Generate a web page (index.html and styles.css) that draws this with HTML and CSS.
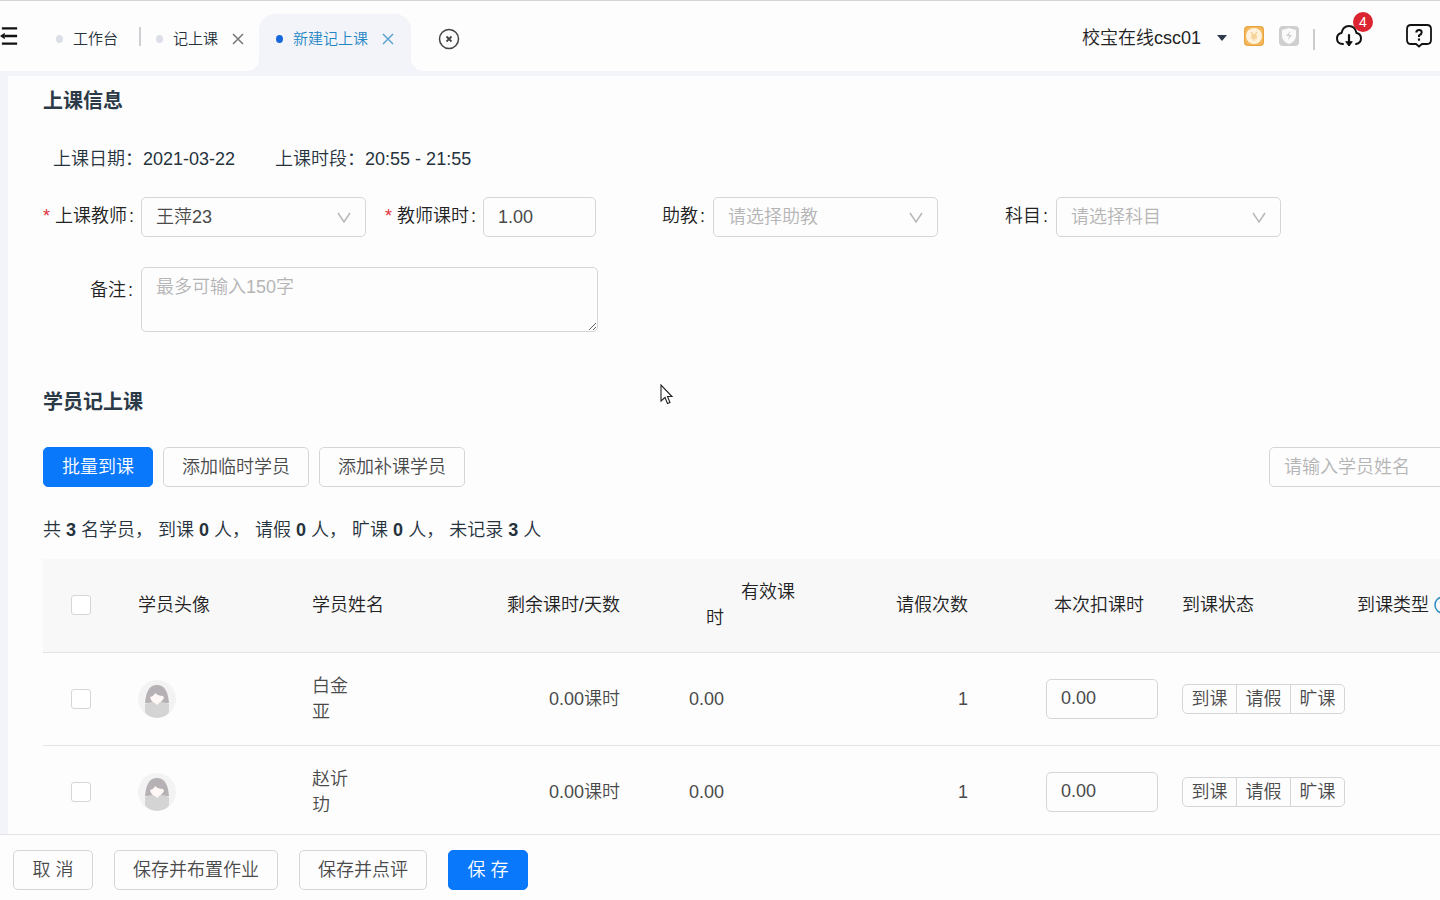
FILE: index.html
```html
<!DOCTYPE html>
<html lang="zh-CN">
<head>
<meta charset="utf-8">
<title>新建记上课</title>
<link rel="stylesheet" href="styles.css">
</head>
<body>
<svg class="sprite" aria-hidden="true">
  <symbol id="cross" viewBox="0 0 12 12"><path d="M1 1l10 10M11 1L1 11" fill="none" stroke="currentColor" stroke-width="1.5"/></symbol>
  <symbol id="chevron" viewBox="0 0 14 12"><path d="M1 1l6 9 6-9" fill="none" stroke="currentColor" stroke-width="1.4"/></symbol>
  <symbol id="avatar" viewBox="0 0 38 38">
    <circle cx="19" cy="19" r="19" fill="#f4f3f4"/>
    <path d="M7 23C8 12 11 5 19 5s11 7 12 18z" fill="#b5b1b4"/>
    <path d="M7 24q3-2 8-2h8q5 0 8 2v8q-2 5-12 6Q9 37 7 32z" fill="#d4d4d5"/>
    <path d="M12 17q4-1 5-4 3 3 8 3l1 2q-2 4-5 5l-2 2-2-2q-4-1-5-6z" fill="#fff8f6"/>
  </symbol>
</svg>

<header class="topbar">
  <button class="icon-btn menu" aria-label="收起菜单">
    <svg width="20" height="20" viewBox="0 0 20 20"><path d="M2 2h16M5 10h13M2 18h16" stroke="#111" stroke-width="2.4" fill="none"/><path d="M0 10l5-3.500v7z" fill="#111"/></svg>
  </button>
  <nav class="tabs">
    <a class="tab" href="#home"><i class="dot"></i>工作台</a>
    <i class="tab-split"></i>
    <div class="tab"><i class="dot"></i><a href="#record">记上课</a><button class="icon-btn" aria-label="关闭记上课"><svg width="12" height="12"><use href="#cross"/></svg></button></div>
    <div class="tab active"><i class="dot"></i><a href="#new">新建记上课</a><button class="icon-btn" aria-label="关闭新建记上课"><svg width="12" height="12"><use href="#cross"/></svg></button></div>
    <button class="icon-btn close-all" aria-label="关闭全部">
      <svg width="22" height="22" viewBox="0 0 22 22" fill="none" stroke="#444"><circle cx="11" cy="11" r="9.500" stroke-width="1.500"/><path d="M8.500 8.500l5 5M13.500 8.500l-5 5" stroke-width="1.800"/></svg>
    </button>
  </nav>
  <div class="tools">
    <button class="icon-btn account">校宝在线csc01<svg width="10" height="6" viewBox="0 0 10 6"><path d="M0 0h10L5 6z" fill="#2f3b4a"/></svg></button>
    <button class="icon-btn coin" aria-label="金币"><svg width="22" height="22" viewBox="0 0 22 22"><rect x="1" y="1" width="20" height="20" rx="4" fill="#e9a33c"/><rect x="2" y="2" width="18" height="18" rx="4" fill="#f5b95c"/><circle cx="11" cy="11" r="8" fill="#fff1dc"/><path d="M8 7l3 4 3-4M11 11v5M8 11h6M8 13h6" fill="none" stroke="#f6cf92" stroke-width="1.300"/></svg></button>
    <button class="icon-btn shield" aria-label="安全"><svg width="22" height="22" viewBox="0 0 22 22"><rect x="1" y="1" width="20" height="20" rx="4" fill="#cfcfcf"/><path d="M11 3l7 2v6q0 5-7 8-7-3-7-8V5z" fill="#fafafa"/><path d="M12 6l-4 5h3l-1 4 4-5h-3z" fill="#cfcfcf"/></svg></button>
    <i class="tool-split"></i>
    <button class="icon-btn cloud" aria-label="下载">
      <svg width="28" height="24" viewBox="0 0 28 24" fill="none" stroke="#111" stroke-width="2" stroke-linecap="round"><path d="M8 20Q2 20 2 14.500 2 10 6.500 9 8 2 14 2t7.500 7Q26 10 26 14.500 26 19 21 20"/><path d="M14 11v10" stroke-width="2.200"/><path d="M11 18l3 4 3-4z" fill="#111" stroke-width="1"/></svg>
      <span class="badge">4</span>
    </button>
    <button class="icon-btn help" aria-label="帮助">
      <svg width="26" height="24" viewBox="0 0 26 24" fill="none" stroke="#111" stroke-width="1.800"><path d="M5 1h16q4 0 4 4v11q0 4-4 4h-5l-3 2.500L10 20H5q-4 0-4-4V5q0-4 4-4z"/><path d="M10.300 8.500Q10.300 6 13 6t2.700 2.400Q15.700 10 13 11.500V13" stroke-width="2"/><path d="M13 14.500v2.200" stroke-width="2.200"/></svg>
    </button>
  </div>
</header>

<main class="panel">
  <section class="info">
    <h2>上课信息</h2>
    <div class="facts"><span>上课日期：<b>2021-03-22</b></span><span>上课时段：<b>20:55 - 21:55</b></span></div>
    <form class="form">
      <label for="teacher" class="required">上课教师</label>
      <div class="select"><select id="teacher" class="control"><option>王萍23</option></select><svg width="14" height="12"><use href="#chevron"/></svg></div>
      <label for="hours" class="required">教师课时</label>
      <input id="hours" class="control" value="1.00">
      <label for="assistant">助教</label>
      <div class="select empty"><select id="assistant" class="control"><option>请选择助教</option></select><svg width="14" height="12"><use href="#chevron"/></svg></div>
      <label for="subject">科目</label>
      <div class="select empty"><select id="subject" class="control"><option>请选择科目</option></select><svg width="14" height="12"><use href="#chevron"/></svg></div>
      <label for="remark" class="remark-label">备注</label>
      <textarea id="remark" class="control" placeholder="最多可输入150字"></textarea>
    </form>
  </section>

  <section class="students">
    <h2>学员记上课</h2>
    <div class="actions">
      <button class="btn primary">批量到课</button>
      <button class="btn">添加临时学员</button>
      <button class="btn">添加补课学员</button>
      <input class="control search" aria-label="学员姓名" placeholder="请输入学员姓名">
    </div>
    <p class="summary">共 <b>3</b> 名学员， 到课 <b>0</b> 人， 请假 <b>0</b> 人， 旷课 <b>0</b> 人， 未记录 <b>3</b> 人</p>
    <table class="table">
      <colgroup><col class="c-check"><col class="c-avatar"><col class="c-name"><col class="c-left"><col class="c-valid"><col class="c-leave"><col class="c-deduct"><col class="c-state"><col class="c-type"></colgroup>
      <thead>
        <tr>
          <th class="check"><input type="checkbox" aria-label="全选"></th>
          <th>学员头像</th>
          <th class="nowrap">学员姓名</th>
          <th class="num">剩余课时/天数</th>
          <th class="num">有效课<span class="wrapped">时</span></th>
          <th class="num">请假次数</th>
          <th class="num deduct-head">本次扣课时</th>
          <th>到课状态</th>
          <th class="type nowrap">到课类型 <svg width="18" height="18" viewBox="0 0 18 18" fill="none" stroke="#2b8cc4" stroke-width="1.500"><circle cx="9" cy="9" r="8"/><path d="M6.500 7q0-2.500 2.500-2.500T11.500 7Q11.500 8.500 9 10v1M9 12.500V14"/></svg></th>
        </tr>
      </thead>
      <tbody>
        <tr>
          <td class="check"><input type="checkbox" aria-label="选择白金亚"></td>
          <td><svg class="avatar" width="38" height="38"><use href="#avatar"/></svg></td>
          <td>白金亚</td>
          <td class="num">0.00课时</td>
          <td class="num valid">0.00</td>
          <td class="num">1</td>
          <td class="deduct"><input class="control" aria-label="本次扣课时" value="0.00"></td>
          <td class="state"><div class="group"><button>到课</button><button>请假</button><button>旷课</button></div></td>
          <td></td>
        </tr>
        <tr>
          <td class="check"><input type="checkbox" aria-label="选择赵䜣玏"></td>
          <td><svg class="avatar" width="38" height="38"><use href="#avatar"/></svg></td>
          <td>赵䜣玏</td>
          <td class="num">0.00课时</td>
          <td class="num valid">0.00</td>
          <td class="num">1</td>
          <td class="deduct"><input class="control" aria-label="本次扣课时" value="0.00"></td>
          <td class="state"><div class="group"><button>到课</button><button>请假</button><button>旷课</button></div></td>
          <td></td>
        </tr>
      </tbody>
    </table>
  </section>
</main>

<footer class="footer">
  <button class="btn">取 消</button>
  <button class="btn">保存并布置作业</button>
  <button class="btn">保存并点评</button>
  <button class="btn primary">保 存</button>
</footer>

<svg class="pointer" width="14" height="21" viewBox="0 0 14 21" aria-hidden="true"><path d="M1 1v16l4-3.500 2.500 6 2.500-1-2.500-6H12z" fill="#fff" stroke="#222" stroke-width="1.100"/></svg>
</body>
</html>
```

FILE: styles.css
```css
* { box-sizing: border-box; }

body {
  margin: 0;
  height: 100vh;
  display: flex;
  flex-direction: column;
  overflow: hidden;
  background: #f3f4f9;
  color: #26323c;
  font: 350 18px/26px "Liberation Sans", "Noto Sans CJK SC", sans-serif;
}

button, input, select, textarea { font: inherit; color: inherit; }
a { color: inherit; text-decoration: none; }
h2 { margin: 0; font-size: 20px; line-height: 30px; font-weight: 700; color: #2c3a47; }
.sprite { display: none; }

.icon-btn {
  display: flex;
  align-items: center;
  padding: 0;
  border: 0;
  background: none;
}

/* top bar */
.topbar {
  flex: none;
  display: flex;
  justify-content: space-between;
  height: 71px;
  border-top: 1px solid #d6d6da;
  background: #fdfdfe;
}
.menu { width: 48px; padding-right: 29px; }
.tabs { flex: 1; display: flex; font-size: 15px; }
.tab {
  display: flex;
  align-items: center;
  padding: 5px 15px 0 8px;
}
.tab:first-child { padding-right: 21px; }
.tab .dot { width: 7px; height: 8px; margin-right: 10px; border-radius: 50%; background: #dcdfe8; }
.tab .icon-btn { margin-left: 14px; color: #777; }
.tab-split { width: 9px; padding-top: 26px; }
.tab-split::before { content: ""; display: block; width: 2px; height: 19px; background: #d0d0d4; }
.tab.active {
  position: relative;
  margin-top: 13px;
  padding: 0 17px 8px;
  color: #1f86c4;
  background: #f3f4f9;
  border-radius: 16px 16px 0 0;
}
.tab.active::before, .tab.active::after {
  content: "";
  position: absolute;
  bottom: 0;
  width: 12px;
  height: 12px;
}
.tab.active::before { right: 100%; background: radial-gradient(circle at 0 0, transparent 12px, #f3f4f9 12px); }
.tab.active::after { left: 100%; background: radial-gradient(circle at 100% 0, transparent 12px, #f3f4f9 12px); }
.tab.active .dot { background: #1668dc; }
.tab.active .icon-btn { color: #5ba3cf; }
.close-all { padding: 5px 0 0 27px; }
.tools { display: flex; align-items: center; padding-right: 8px; }
.account { gap: 16px; padding-top: 4px; color: #222; }
.coin { margin-left: 16px; }
.shield { margin-left: 13px; }
.tool-split { width: 2px; height: 21px; margin: 6px 20px 0 13px; background: #ccc; }
.cloud { position: relative; margin-right: 43px; }
.badge {
  position: absolute;
  right: -10px;
  top: -12px;
  width: 20px;
  height: 20px;
  border-radius: 50%;
  background: #dc2430;
  color: #fff;
  font-size: 14px;
  line-height: 20px;
  text-align: center;
}

/* content */
.panel {
  flex: 1;
  min-height: 0;
  margin: 5px 0 0 8px;
  padding: 10px 0 0 35px;
  overflow: hidden;
  background: #fdfdfe;
}
.facts { display: flex; gap: 40px; padding: 30px 0 0 10px; }
.facts b { font-weight: 350; }
.form {
  display: grid;
  grid-template-columns: 98px 225px 117px 113px 117px 225px 118px 225px;
  row-gap: 30px;
  padding-top: 25px;
  color: #222;
}
.form label { display: flex; justify-content: flex-end; padding: 6px 8px 0 0; white-space: nowrap; }
.form label::after { content: ":"; margin-left: 2px; }
.form .required::before { content: "*"; margin-right: 5px; color: #e0303a; }
.form .required { padding-right: 7px; }
.form .remark-label { padding-top: 10px; }

.control {
  display: block;
  width: 100%;
  height: 40px;
  padding: 0 14px;
  border: 1px solid #d6d6d9;
  border-radius: 5px;
  background: #fdfdfe;
  color: #4a4a4a;
  outline: 0;
}
.control::placeholder { color: #b5b5b5; }
.select { position: relative; }
.select .control { appearance: none; }
.select svg { position: absolute; right: 15px; top: 15px; color: #b5b5b5; pointer-events: none; }
.select.empty .control { color: #b5b5b5; }
#remark { grid-column: 2 / 5; width: 457px; height: 65px; padding-top: 6px; }

.students { padding-top: 55px; }
.actions { display: flex; gap: 10px; padding-top: 30px; }
.btn {
  min-width: 80px;
  height: 40px;
  padding: 0 18px;
  border: 1px solid #d6d6d9;
  border-radius: 5px;
  background: #fdfdfe;
  color: #4a4a4a;
  white-space: nowrap;
}
.btn.primary { border-color: #0a78fa; background: #0a78fa; color: #fff; }
.search { flex: none; width: 220px; margin: 0 -49px 0 auto; }
.summary { margin: 0; padding: 30px 0 16px; white-space: nowrap; }
.summary b { font-weight: 700; }

.table { width: 1500px; table-layout: fixed; border-collapse: collapse; color: #4a4a4a; }
.c-check { width: 79px; }
.c-avatar { width: 174px; }
.c-name { width: 80px; }
.c-left { width: 260px; }
.c-valid { width: 175px; }
.c-leave { width: 173px; }
.c-deduct { width: 182px; }
.c-state { width: 179px; }
.table th, .table td {
  height: 93px;
  padding: 20px 16px;
  border-bottom: 1px solid #e3e3e6;
  font-weight: 350;
  text-align: left;
}
.table th { background: #f8f8f9; color: #222; }
.table .num { text-align: right; }
.table .nowrap { white-space: nowrap; }
.table .check { padding: 0 0 0 28px; }
.check input {
  display: block;
  appearance: none;
  width: 20px;
  height: 20px;
  margin: 0;
  border: 1px solid #d6d6d9;
  border-radius: 3px;
  background: #fff;
}
.wrapped { display: block; padding-right: 71px; }
.table .valid { padding-right: 87px; }
.table .deduct-head { padding-right: 22px; }
.table .deduct { padding: 0 8px 0 62px; }
.table .state { padding-right: 0; }
.table .type { padding-left: 12px; }
.type svg { vertical-align: -3px; }
.avatar { display: block; }
.group { display: flex; width: 163px; height: 30px; border: 1px solid #d6d6d9; border-radius: 5px; }
.group button { flex: 1; padding: 0; border: 0; background: none; line-height: 26px; }
.group button + button { border-left: 1px solid #d6d6d9; }

.footer {
  flex: none;
  display: flex;
  gap: 21px;
  padding: 15px 13px 10px;
  border-top: 1px solid #e3e3e6;
  background: #fdfdfe;
}

.pointer { position: absolute; left: 660px; top: 384px; }
```
